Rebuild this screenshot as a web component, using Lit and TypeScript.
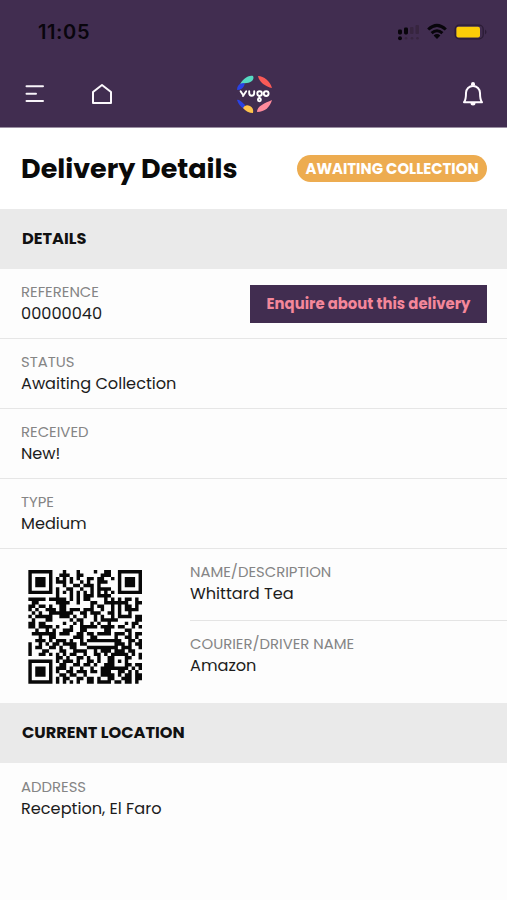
import { LitElement, html, svg, css } from "lit";
import { customElement, property } from "lit/decorators.js";

// QR modules, one row per string: "#" is a dark module.
const QR = [
  "#######...#...#....#..##..#######",
  "#.....#..###..##.....###..#.....#",
  "#.###.#.#.#.#.#..##.##..#.#.###.#",
  "#.###.#.###.#..#.#..###...#.###.#",
  "#.###.#...#..##.###.#.....#.###.#",
  "#.....#.#..##..#..#.####..#.....#",
  "#######.#.#.#.#.#.#.#.#.#.#######",
  "........#...#.#.###.####.........",
  "#####.#####.#.#.##....#.#.#.##.#.",
  ".##.....####..#...##..#######..##",
  "##.##.#..##.......#.##..#.#.##.#.",
  "#.#..###.##.###.###..#..#.#.####.",
  ".#.#..#######..##.###..##.#..#...",
  "#.#####..###.#..#..#.#..#.####.##",
  ".#...##.....#.##...#.#####.....##",
  "##.##.....#..#.#..#.#..#....#.##.",
  "##.####.#...#..#####.####.##..#.#",
  "..#..#.#..###..##.....##....##...",
  ".#######.###..##.##.####.###.#.##",
  "...#..##.....###..##.....#..##.#.",
  "..###.#.###.#..#.##########..##.#",
  "#..#.#.##.####.##........###.#.##",
  "#.##..##.#..##...#########.###..#",
  "#...##...##..####..#.###.###.##..",
  "#..##.#.#.#.##..#..##.#.#####.#.#",
  "........##.#..##.#..#..##...##..#",
  "#######.#.###.#..##.#..##.#.#....",
  "#.....#..##..##.##.#..###...##.##",
  "#.###.#.###.#..#..#..########.#.#",
  "#.###.#.#..##.###.##.###..##.#.#.",
  "#.###.#..##.##..#....####.#.##.##",
  "#.....#.#.##..##.##.#..##..###.##",
  "#######.#.#.#.#..##.####.##.##.#.",
];

@customElement("field-item")
class FieldItem extends LitElement {
  @property() label = "";
  @property() value = "";
  static styles = css`
    :host { display: block; }
    .label { margin-bottom: 2px; font-size: 14.85px; line-height: 19px; color: #858585; white-space: nowrap; }
    .value { font-size: 16.15px; line-height: 21px; color: #1c1c1c; white-space: nowrap; }
  `;
  render() {
    return html`<div class="label">${this.label}</div>
      <div class="value">${this.value}</div>`;
  }
}

@customElement("app-root")
class AppRoot extends LitElement {
  static styles = css`
    :host { display: block; height: 900px; background: #fdfdfd; overflow: hidden;
      font-family: Poppins, "Inter", "Liberation Sans", sans-serif; color: #111; }
    * { box-sizing: border-box; }
    svg { display: block; }
    .top { height: 128px; background: #412d50; border-bottom: 1px solid #9b90a3; }
    .status { height: 64px; padding: 0 18px 0 38px; display: flex; align-items: center; justify-content: space-between; }
    .time { font-family: "Inter", sans-serif; font-size: 20px; font-weight: 600; color: #09050d; letter-spacing: 0.6px; }
    .nav { height: 60px; display: grid; grid-template-columns: 1fr 40px 1fr; align-items: center; padding: 0 22px 0 24px; }
    .left { display: flex; gap: 45px; align-items: center; }
    .bell { justify-self: end; }
    .title { height: 81px; padding: 0 20px 0 21px; display: flex; align-items: center; justify-content: space-between; background: #fff; }
    h1 { margin: 0; font-size: 27px; line-height: 36px; font-weight: 700; white-space: nowrap; color: #0a0a0a; }
    .badge { width: 190px; height: 27px; border-radius: 14px; background: #edac50; color: #fff; font-size: 14.85px;
      font-weight: 700; line-height: 27px; text-align: center; white-space: nowrap; }
    .section { height: 60px; padding: 0 22px; background: #eaeaea; font-size: 16.2px; line-height: 59px; font-weight: 700; color: #111; }
    .row { height: 70px; padding: 13px 20px 0 21px; display: flex; justify-content: space-between; border-bottom: 1px solid #e6e6e6; }
    .last { padding-top: 14px; border: 0; }
    .enquire { width: 237px; height: 38px; margin-top: 3px; border: 0; padding: 0 0 1px; background: #412d50; color: #f4879a;
      font: inherit; font-size: 14.85px; font-weight: 700; white-space: nowrap; }
    .parcel { height: 154px; display: grid; grid-template-columns: 190px 1fr; }
    .qr { padding: 21px 0 0 28px; }
    .name { height: 72px; padding-top: 13px; border-bottom: 1px solid #e4e4e4; }
    .courier { padding-top: 13px; }
  `;

  qr() {
    const d = QR.map((row, y) =>
      [...row.matchAll(/#+/g)].map((m) => `M${m.index} ${y}h${m[0].length}v1h-${m[0].length}z`).join("")
    ).join("");
    return html`<svg width="114" height="114" viewBox="-.1 0 33.1 33.1">${svg`<path d=${d} fill="#080808"/>`}</svg>`;
  }

  field(label: string, value: string) {
    return html`<field-item .label=${label} .value=${value}></field-item>`;
  }

  render() {
    return html`
      <div class="top">
        <div class="status">
          <span class="time">11:05</span>
          <svg width="92" height="20" viewBox="0 0 92 20">
            <g fill="#08050b"><rect x="1" y="7.5" width="4" height="5" rx="1.4"/><rect x="7" y="5.5" width="4" height="7" rx="1.4"/><circle cx="3" cy="16.3" r="2"/></g>
            <g fill="#37253f"><rect x="13" y="5" width="3.5" height="7" rx="1"/><rect x="18.5" y="3" width="3.5" height="9" rx="1"/><circle cx="9" cy="16.3" r="1.3"/><circle cx="15" cy="16.3" r="1.3"/><circle cx="20.5" cy="16.3" r="1.3"/></g>
            <g fill="none" stroke="#08050b" stroke-width="3"><path d="M31.2 7.5Q40 -.8 48.8 7.5M34.6 11.2Q40 6.2 45.4 11.2"/></g>
            <path d="M36.6 13.4Q40 10.8 43.4 13.4L40 17z" fill="#08050b"/>
            <rect x="58.2" y="3.2" width="28" height="13.6" rx="4" fill="none" stroke="#2b1c35" stroke-width="1.3"/>
            <rect x="59.4" y="4.8" width="23.6" height="10.6" rx="2" fill="#fccd08"/>
            <path d="M88 7.5q3 2.5 0 5z" fill="#2b1c35"/>
          </svg>
        </div>
        <div class="nav">
          <div class="left">
            <svg width="22" height="22" viewBox="0 0 22 22"><path d="M2.5 3.2h16.5M2.5 10.7h9.5M2.5 18h16.5" stroke="#f8f4f9" stroke-width="2" stroke-linecap="round"/></svg>
            <svg width="22" height="22" viewBox="0 0 22 22"><path d="M2 20V9L11 2l9 7v11z" fill="none" stroke="#fbf8fc" stroke-width="2" stroke-linejoin="round"/></svg>
          </div>
          <svg width="40" height="40" viewBox="0 0 40 40">
            <path d="M4 13C7 5 13 1 18 2C20 5 16 9 12 9Q7 9 4 13z" fill="#56dac2"/>
            <path d="M2 16Q2 11 6 9.5Q11 8 9 12Q7 16 2 16z" fill="#2943e5"/>
            <path d="M23 2C29 2 35 7 37 14C31 13 24 8 23 2z" fill="#fb5a57"/>
            <path d="M2 26Q4 25 10 31L9 35Q4 32 2 26z" fill="#2943e5"/>
            <path d="M8 34Q10 30 15 32Q19 34 18 39Q12 39 8 34z" fill="#ffc44b"/>
            <path d="M22 38C22 32 30 29 37 26C35 33 30 38 22 38z" fill="#ff8b9c"/>
            <g fill="none" stroke="#fff" stroke-width="1.9" stroke-linecap="round" stroke-linejoin="round"><path d="M5.6 17.3L8.4 21.6M11.2 17.3L8 22M14.2 17.3v1.8q0 2.7 2.5 2.7t2.5-2.7v-1.8"/><circle cx="24.6" cy="19.6" r="2.3"/><circle cx="31.2" cy="19.6" r="2.4"/><path d="M24.4 22.2v1.6"/><circle cx="24.4" cy="25.8" r="1.5"/></g>
          </svg>
          <svg class="bell" width="24" height="26" viewBox="0 0 24 26"><path d="M3 21.2c1.7-1.8 2-3.2 2-9.2a7 7 0 0 1 14 0c0 6 .3 7.4 2 9.2z" fill="none" stroke="#fffaff" stroke-width="2" stroke-linejoin="round"/><path d="M10 4.5V3a2 2 0 0 1 4 0v1.5zM9.5 22h5a2.5 2.5 0 0 1-5 0z" fill="#fffaff"/></svg>
        </div>
      </div>
      <div class="title"><h1>Delivery Details</h1><div class="badge">AWAITING COLLECTION</div></div>
      <div class="section">DETAILS</div>
      <div class="row">${this.field("REFERENCE", "00000040")}<button class="enquire">Enquire about this delivery</button></div>
      <div class="row">${this.field("STATUS", "Awaiting Collection")}</div>
      <div class="row">${this.field("RECEIVED", "New!")}</div>
      <div class="row">${this.field("TYPE", "Medium")}</div>
      <div class="parcel">
        <div class="qr">${this.qr()}</div>
        <div>
          <div class="name">${this.field("NAME/DESCRIPTION", "Whittard Tea")}</div>
          <div class="courier">${this.field("COURIER/DRIVER NAME", "Amazon")}</div>
        </div>
      </div>
      <div class="section">CURRENT LOCATION</div>
      <div class="row last">${this.field("ADDRESS", "Reception, El Faro")}</div>
    `;
  }
}
